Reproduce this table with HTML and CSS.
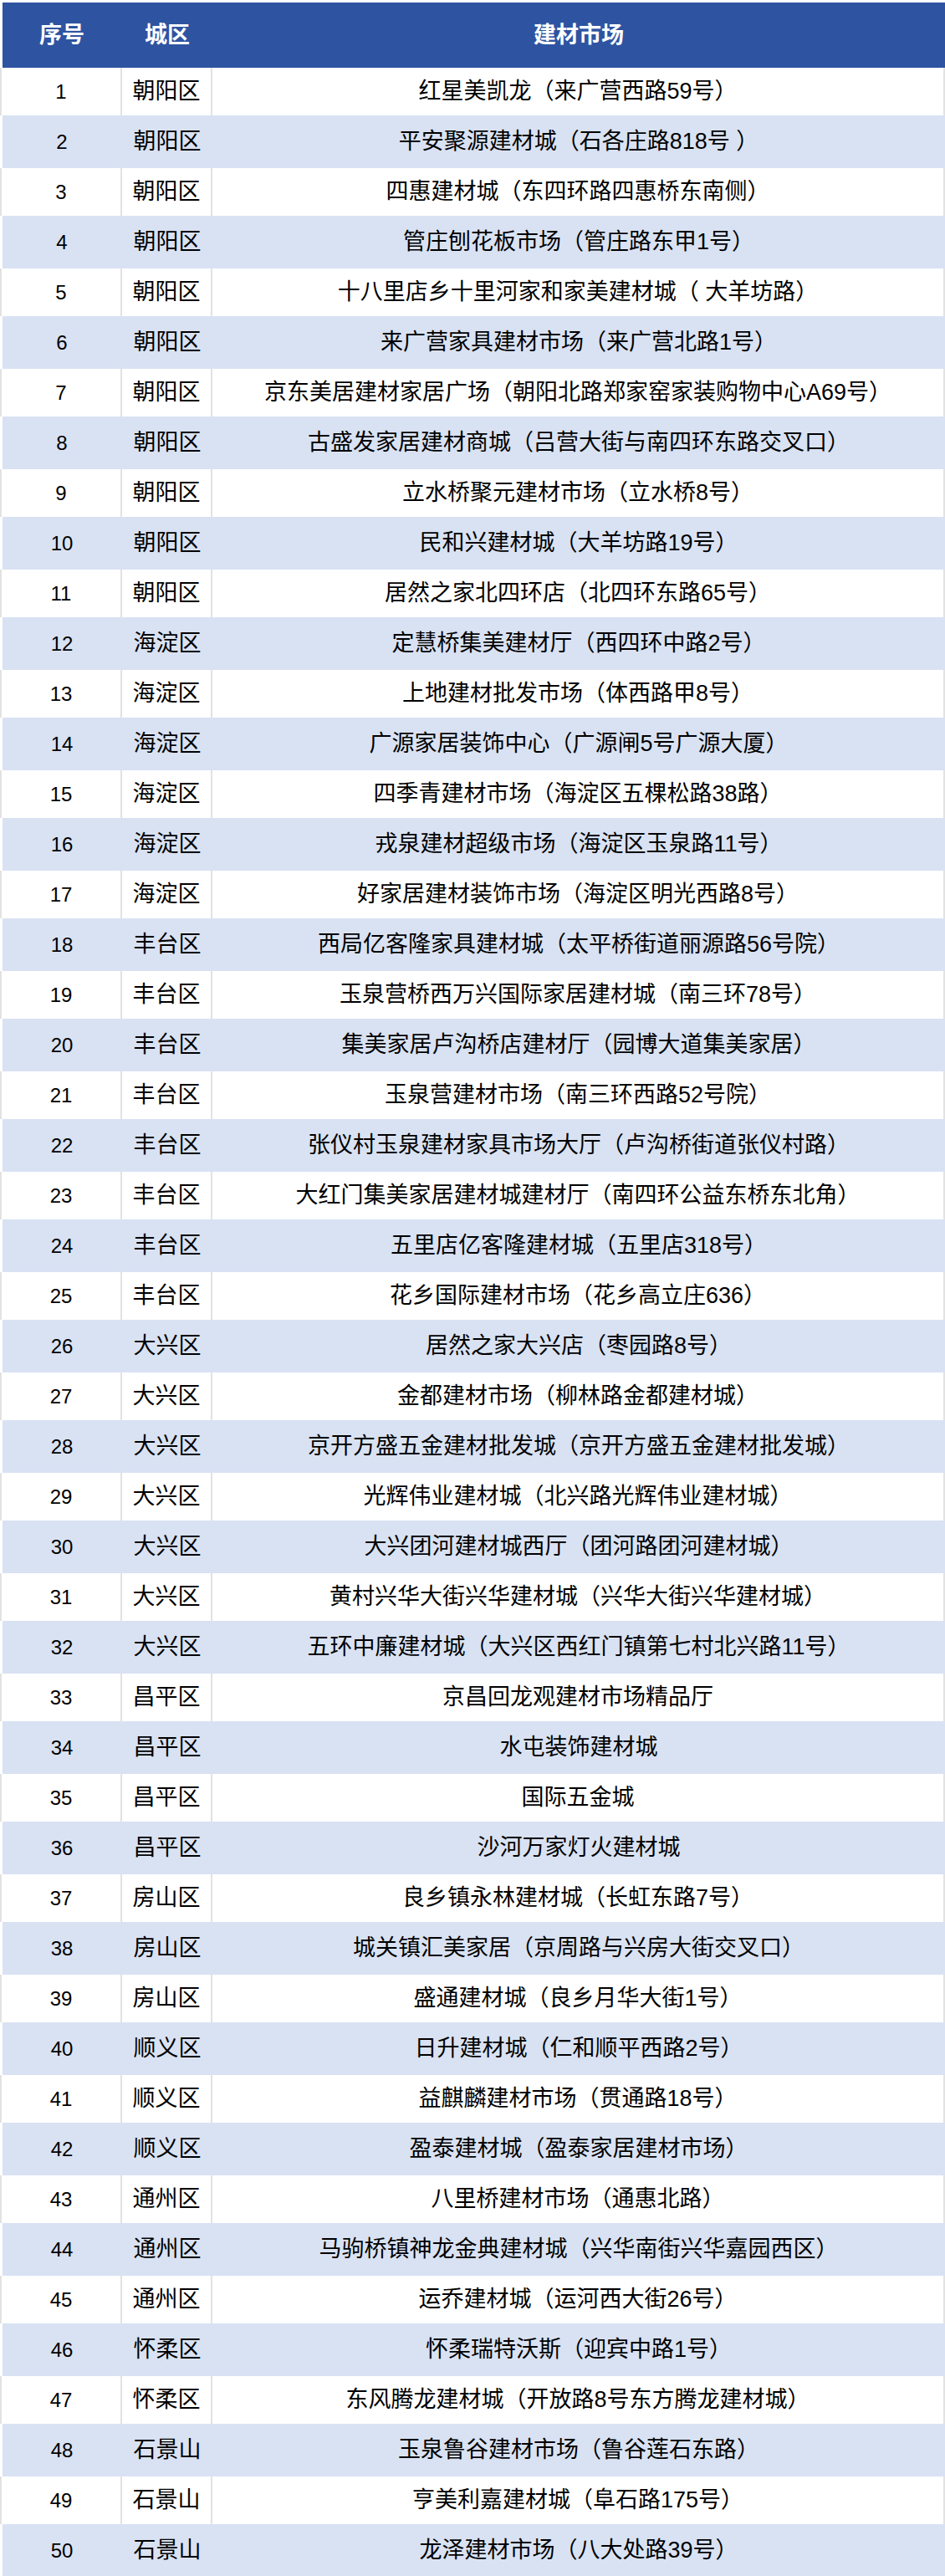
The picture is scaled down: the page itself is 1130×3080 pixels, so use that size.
FILE: index.html
```html
<!DOCTYPE html>
<html lang="zh-CN">
<head>
<meta charset="utf-8">
<title>北京建材市场</title>
<link rel="stylesheet" href="styles.css">
</head>
<body>
<div class="table">
  <div class="row head">
    <div class="cell">序号</div>
    <div class="cell">城区</div>
    <div class="cell">建材市场</div>
  </div>
  <div class="row"><div class="cell num">1</div><div class="cell">朝阳区</div><div class="cell name">红星美凯龙（来广营西路59号）</div></div>
  <div class="row alt"><div class="cell num">2</div><div class="cell">朝阳区</div><div class="cell name">平安聚源建材城（石各庄路818号 ）</div></div>
  <div class="row"><div class="cell num">3</div><div class="cell">朝阳区</div><div class="cell name">四惠建材城（东四环路四惠桥东南侧）</div></div>
  <div class="row alt"><div class="cell num">4</div><div class="cell">朝阳区</div><div class="cell name">管庄刨花板市场（管庄路东甲1号）</div></div>
  <div class="row"><div class="cell num">5</div><div class="cell">朝阳区</div><div class="cell name">十八里店乡十里河家和家美建材城（ 大羊坊路）</div></div>
  <div class="row alt"><div class="cell num">6</div><div class="cell">朝阳区</div><div class="cell name">来广营家具建材市场（来广营北路1号）</div></div>
  <div class="row"><div class="cell num">7</div><div class="cell">朝阳区</div><div class="cell name">京东美居建材家居广场（朝阳北路郑家窑家装购物中心A69号）</div></div>
  <div class="row alt"><div class="cell num">8</div><div class="cell">朝阳区</div><div class="cell name">古盛发家居建材商城（吕营大街与南四环东路交叉口）</div></div>
  <div class="row"><div class="cell num">9</div><div class="cell">朝阳区</div><div class="cell name">立水桥聚元建材市场（立水桥8号）</div></div>
  <div class="row alt"><div class="cell num">10</div><div class="cell">朝阳区</div><div class="cell name">民和兴建材城（大羊坊路19号）</div></div>
  <div class="row"><div class="cell num">11</div><div class="cell">朝阳区</div><div class="cell name">居然之家北四环店（北四环东路65号）</div></div>
  <div class="row alt"><div class="cell num">12</div><div class="cell">海淀区</div><div class="cell name">定慧桥集美建材厅（西四环中路2号）</div></div>
  <div class="row"><div class="cell num">13</div><div class="cell">海淀区</div><div class="cell name">上地建材批发市场（体西路甲8号）</div></div>
  <div class="row alt"><div class="cell num">14</div><div class="cell">海淀区</div><div class="cell name">广源家居装饰中心（广源闸5号广源大厦）</div></div>
  <div class="row"><div class="cell num">15</div><div class="cell">海淀区</div><div class="cell name">四季青建材市场（海淀区五棵松路38路）</div></div>
  <div class="row alt"><div class="cell num">16</div><div class="cell">海淀区</div><div class="cell name">戎泉建材超级市场（海淀区玉泉路11号）</div></div>
  <div class="row"><div class="cell num">17</div><div class="cell">海淀区</div><div class="cell name">好家居建材装饰市场（海淀区明光西路8号）</div></div>
  <div class="row alt"><div class="cell num">18</div><div class="cell">丰台区</div><div class="cell name">西局亿客隆家具建材城（太平桥街道丽源路56号院）</div></div>
  <div class="row"><div class="cell num">19</div><div class="cell">丰台区</div><div class="cell name">玉泉营桥西万兴国际家居建材城（南三环78号）</div></div>
  <div class="row alt"><div class="cell num">20</div><div class="cell">丰台区</div><div class="cell name">集美家居卢沟桥店建材厅（园博大道集美家居）</div></div>
  <div class="row"><div class="cell num">21</div><div class="cell">丰台区</div><div class="cell name">玉泉营建材市场（南三环西路52号院）</div></div>
  <div class="row alt"><div class="cell num">22</div><div class="cell">丰台区</div><div class="cell name">张仪村玉泉建材家具市场大厅（卢沟桥街道张仪村路）</div></div>
  <div class="row"><div class="cell num">23</div><div class="cell">丰台区</div><div class="cell name">大红门集美家居建材城建材厅（南四环公益东桥东北角）</div></div>
  <div class="row alt"><div class="cell num">24</div><div class="cell">丰台区</div><div class="cell name">五里店亿客隆建材城（五里店318号）</div></div>
  <div class="row"><div class="cell num">25</div><div class="cell">丰台区</div><div class="cell name">花乡国际建材市场（花乡高立庄636）</div></div>
  <div class="row alt"><div class="cell num">26</div><div class="cell">大兴区</div><div class="cell name">居然之家大兴店（枣园路8号）</div></div>
  <div class="row"><div class="cell num">27</div><div class="cell">大兴区</div><div class="cell name">金都建材市场（柳林路金都建材城）</div></div>
  <div class="row alt"><div class="cell num">28</div><div class="cell">大兴区</div><div class="cell name">京开方盛五金建材批发城（京开方盛五金建材批发城）</div></div>
  <div class="row"><div class="cell num">29</div><div class="cell">大兴区</div><div class="cell name">光辉伟业建材城（北兴路光辉伟业建材城）</div></div>
  <div class="row alt"><div class="cell num">30</div><div class="cell">大兴区</div><div class="cell name">大兴团河建材城西厅（团河路团河建材城）</div></div>
  <div class="row"><div class="cell num">31</div><div class="cell">大兴区</div><div class="cell name">黄村兴华大街兴华建材城（兴华大街兴华建材城）</div></div>
  <div class="row alt"><div class="cell num">32</div><div class="cell">大兴区</div><div class="cell name">五环中廉建材城（大兴区西红门镇第七村北兴路11号）</div></div>
  <div class="row"><div class="cell num">33</div><div class="cell">昌平区</div><div class="cell name">京昌回龙观建材市场精品厅</div></div>
  <div class="row alt"><div class="cell num">34</div><div class="cell">昌平区</div><div class="cell name">水屯装饰建材城</div></div>
  <div class="row"><div class="cell num">35</div><div class="cell">昌平区</div><div class="cell name">国际五金城</div></div>
  <div class="row alt"><div class="cell num">36</div><div class="cell">昌平区</div><div class="cell name">沙河万家灯火建材城</div></div>
  <div class="row"><div class="cell num">37</div><div class="cell">房山区</div><div class="cell name">良乡镇永林建材城（长虹东路7号）</div></div>
  <div class="row alt"><div class="cell num">38</div><div class="cell">房山区</div><div class="cell name">城关镇汇美家居（京周路与兴房大街交叉口）</div></div>
  <div class="row"><div class="cell num">39</div><div class="cell">房山区</div><div class="cell name">盛通建材城（良乡月华大街1号）</div></div>
  <div class="row alt"><div class="cell num">40</div><div class="cell">顺义区</div><div class="cell name">日升建材城（仁和顺平西路2号）</div></div>
  <div class="row"><div class="cell num">41</div><div class="cell">顺义区</div><div class="cell name">益麒麟建材市场（贯通路18号）</div></div>
  <div class="row alt"><div class="cell num">42</div><div class="cell">顺义区</div><div class="cell name">盈泰建材城（盈泰家居建材市场）</div></div>
  <div class="row"><div class="cell num">43</div><div class="cell">通州区</div><div class="cell name">八里桥建材市场（通惠北路）</div></div>
  <div class="row alt"><div class="cell num">44</div><div class="cell">通州区</div><div class="cell name">马驹桥镇神龙金典建材城（兴华南街兴华嘉园西区）</div></div>
  <div class="row"><div class="cell num">45</div><div class="cell">通州区</div><div class="cell name">运乔建材城（运河西大街26号）</div></div>
  <div class="row alt"><div class="cell num">46</div><div class="cell">怀柔区</div><div class="cell name">怀柔瑞特沃斯（迎宾中路1号）</div></div>
  <div class="row"><div class="cell num">47</div><div class="cell">怀柔区</div><div class="cell name">东风腾龙建材城（开放路8号东方腾龙建材城）</div></div>
  <div class="row alt"><div class="cell num">48</div><div class="cell">石景山</div><div class="cell name">玉泉鲁谷建材市场（鲁谷莲石东路）</div></div>
  <div class="row"><div class="cell num">49</div><div class="cell">石景山</div><div class="cell name">亨美利嘉建材城（阜石路175号）</div></div>
  <div class="row alt"><div class="cell num">50</div><div class="cell">石景山</div><div class="cell name">龙泽建材市场（八大处路39号）</div></div>
</div>
</body>
</html>
```

FILE: styles.css
```css
html, body {
  margin: 0;
  padding: 0;
  background: #ffffff;
}

body {
  font-family: "Liberation Sans", "Noto Sans CJK SC", sans-serif;
  color: #000000;
  font-size: 27px;
}

.table {
  display: flex;
  flex-direction: column;
  width: 1130px;
}

.row {
  display: grid;
  grid-template-columns: 142px 106px 874px;
  column-gap: 2px;
  height: 57px;
  background: #e2e2e2;
  border-left: 2px solid #e2e2e2;
  border-right: 2px solid #e2e2e2;
}

.cell {
  display: flex;
  align-items: center;
  justify-content: center;
  background: #ffffff;
  white-space: nowrap;
  line-height: 1;
}

.cell.num {
  font-size: 24px;
}

.row.alt {
  height: 63px;
  background: #d9e2f3;
  border-left: 3px solid #ffffff;
  border-right: 1px solid #d9e2f3;
}

.row.alt .cell {
  background: transparent;
}

.row.head {
  margin-top: 3px;
  height: 78px;
  background: #2e54a1;
  border-left: 3px solid #ffffff;
  border-right: 1px solid #2e54a1;
}

.row.head .cell {
  background: transparent;
  color: #ffffff;
  font-weight: bold;
  font-size: 27px;
}
```
